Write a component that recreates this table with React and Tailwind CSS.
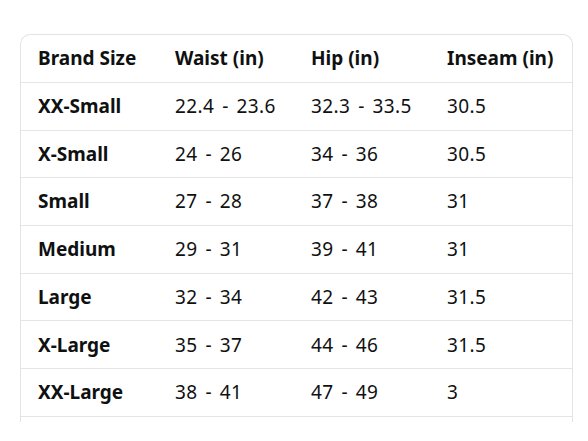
const rows = [
  ["XX-Small", "22.4 - 23.6", "32.3 - 33.5", "30.5"],
  ["X-Small", "24 - 26", "34 - 36", "30.5"],
  ["Small", "27 - 28", "37 - 38", "31"],
  ["Medium", "29 - 31", "39 - 41", "31"],
  ["Large", "32 - 34", "42 - 43", "31.5"],
  ["X-Large", "35 - 37", "44 - 46", "31.5"],
  ["XX-Large", "38 - 41", "47 - 49", "3"],
]

const cols = "grid grid-cols-[137px_136px_136px_1fr]"

const App = () => {
  return (
    <div className="w-[588px] h-[441px] bg-white pt-[34px] pl-[20px] font-['Noto_Sans',sans-serif] text-[#0f1111]">
      <div className="w-[553px] h-[388px] overflow-hidden border-t border-x border-[#e3e3e3] rounded-t-[10px]">
        <div className={`${cols} h-[48px] items-center border-b border-[#e3e6e6] text-[19px] font-bold`}>
          <div className="pl-[17px]">Brand Size</div>
          <div className="pl-[17px]">Waist (in)</div>
          <div className="pl-[17px]">Hip (in)</div>
          <div className="pl-[17px]">Inseam (in)</div>
        </div>
        {rows.map((r) => (
          <div key={r[0]} className={`${cols} h-[47.7px] items-center border-b border-[#e3e6e6] text-[19px]`}>
            <div className="pl-[17px] font-bold">{r[0]}</div>
            <div className="pl-[17px] tracking-[0.4px] [word-spacing:2.5px]">{r[1]}</div>
            <div className="pl-[17px] tracking-[0.4px] [word-spacing:2.5px]">{r[2]}</div>
            <div className="pl-[17px] tracking-[0.4px]">{r[3]}</div>
          </div>
        ))}
      </div>
    </div>
  )
}

export default App
